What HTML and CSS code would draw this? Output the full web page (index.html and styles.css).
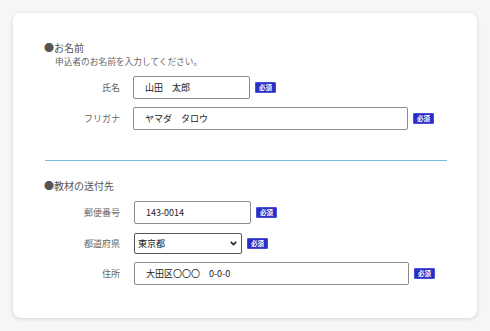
FILE: index.html
```html
<!DOCTYPE html>
<html lang="ja">
<head>
<meta charset="utf-8">
<link rel="stylesheet" href="styles.css">
</head>
<body>
<div class="card">
  <div class="sec-title">●お名前</div>
  <div class="note">申込者のお名前を入力してください。</div>
  <div class="row first">
    <label class="lbl">氏名</label>
    <input class="field short" type="text" value="山田　太郎">
    <span class="req">必須</span>
  </div>
  <div class="row">
    <label class="lbl">フリガナ</label>
    <input class="field long" type="text" value="ヤマダ　タロウ">
    <span class="req">必須</span>
  </div>
  <div class="divider"></div>
  <div class="sec-title sec2">●教材の送付先</div>
  <div class="row first2">
    <label class="lbl">郵便番号</label>
    <input class="field short" type="text" value="143-0014">
    <span class="req">必須</span>
  </div>
  <div class="row sel-row">
    <label class="lbl">都道府県</label>
    <span class="sel-wrap">
      <select class="pref"><option>東京都</option></select>
      <svg class="chev" width="7" height="5" viewBox="0 0 7 5"><path d="M0.8 0.9 L3.5 3.6 L6.2 0.9" fill="none" stroke="#222" stroke-width="1.5"/></svg>
    </span>
    <span class="req">必須</span>
  </div>
  <div class="row sel-after">
    <label class="lbl">住所</label>
    <input class="field long" type="text" value="大田区〇〇〇　0-0-0">
    <span class="req">必須</span>
  </div>
</div>
</body>
</html>
```
FILE: styles.css
```css
html, body {
  margin: 0;
  padding: 0;
}
body {
  background: #f6f6f6;
  font-family: "Noto Sans CJK JP", "Noto Sans", sans-serif;
  width: 490px;
  height: 331px;
  overflow: hidden;
}
.card {
  margin: 13px;
  width: 464px;
  height: 305px;
  box-sizing: border-box;
  background: #fff;
  border-radius: 8px;
  box-shadow: 0 1px 4px rgba(0, 0, 0, 0.14);
  padding: 28px 30px 0 31px;
}
.sec-title {
  font-size: 10px;
  line-height: 14px;
  color: #555;
}
.note {
  font-size: 8.7px;
  line-height: 14px;
  color: #666;
  margin-left: 11px;
}
.row {
  display: flex;
  align-items: center;
  margin-top: 8px;
}
.row.first {
  margin-top: 7px;
}
.lbl {
  width: 89px;
  box-sizing: border-box;
  padding-right: 13px;
  text-align: right;
  font-size: 9px;
  color: #666;
  flex: none;
}
.field {
  box-sizing: border-box;
  height: 23px;
  border: 1px solid #8c8c8c;
  border-radius: 2px;
  padding: 0 0 0 11px;
  font-family: "Noto Sans CJK JP", "Noto Sans", sans-serif;
  font-size: 9px;
  color: #222;
  background: #fff;
  margin: 0;
}
.field.short {
  width: 117px;
}
.field.long {
  width: 275px;
}
.req {
  margin-left: 5px;
  width: 21px;
  height: 11px;
  box-sizing: border-box;
  background: #2a2ec4;
  border: 1px solid #4a4fd6;
  border-radius: 1px;
  color: #fff;
  font-size: 6.5px;
  font-weight: bold;
  line-height: 9px;
  text-align: center;
  flex: none;
}
.divider {
  height: 1px;
  background: #78bbdb;
  margin-top: 30px;
  margin-left: 1px;
}
.sec2 {
  margin-top: 18px;
}
.row.first2 {
  margin-top: 8px;
}
.row.first2 .lbl,
.row.sel-row .lbl,
.row.sel-after .lbl {
  width: 90px;
  padding-right: 14px;
}
.row.sel-row {
  margin-top: 9px;
}
.sel-wrap {
  position: relative;
  display: block;
  width: 108px;
  height: 21px;
  flex: none;
}
.pref {
  -webkit-appearance: none;
  appearance: none;
  box-sizing: border-box;
  width: 108px;
  height: 21px;
  margin: 0;
  border: 1px solid #555;
  border-radius: 2px;
  background: #fff;
  font-family: "Noto Sans CJK JP", "Noto Sans", sans-serif;
  font-size: 9px;
  color: #111;
  padding: 0 0 0 3px;
  display: block;
}
.chev {
  position: absolute;
  right: 5px;
  top: 8px;
  pointer-events: none;
}
```
